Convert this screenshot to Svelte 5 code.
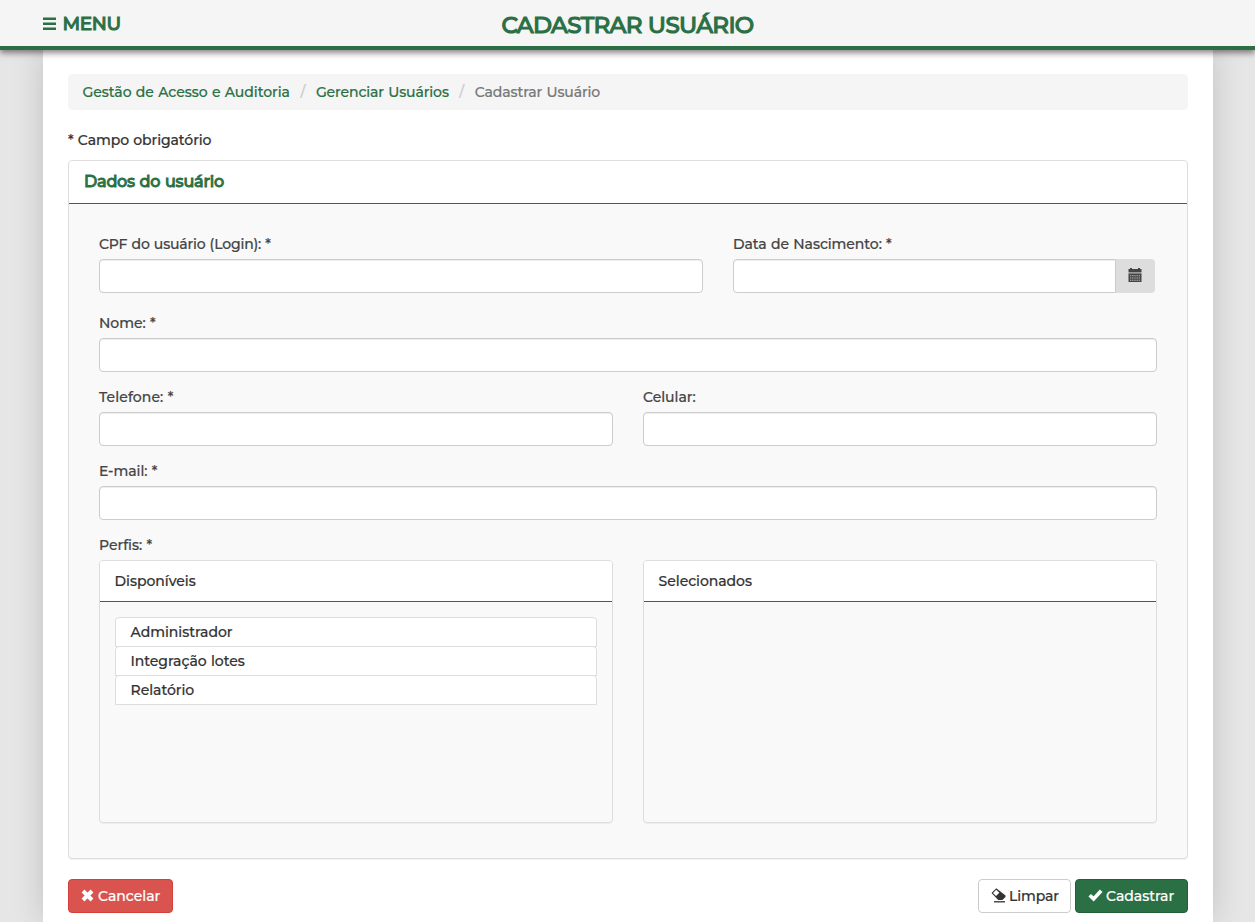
<script>
  const profiles = ['Administrador', 'Integração lotes', 'Relatório'];
</script>

<header class="topbar">
  <button class="menu" type="button">
    <svg width="13" height="14" viewBox="0 0 13 14" aria-hidden="true">
      <path d="M0 1.8H13M0 6.8H13M0 11.8H13" stroke="currentColor" stroke-width="2.6" />
    </svg>
    <span>MENU</span>
  </button>
  <h1>CADASTRAR USUÁRIO</h1>
</header>

<main class="page">
  <nav class="crumbs">
    <a href="#gestao">Gestão de Acesso e Auditoria</a>
    <i>/</i>
    <a href="#usuarios" class="tight">Gerenciar Usuários</a>
    <i>/</i>
    <span class="tight">Cadastrar Usuário</span>
  </nav>

  <p class="note">* Campo obrigatório</p>

  <section class="panel">
    <h2>Dados do usuário</h2>
    <div class="body">
      <div class="row first">
        <div class="field cpf">
          <label for="cpf">CPF do usuário (Login): *</label>
          <input id="cpf" />
        </div>
        <div class="field date">
          <label for="nasc">Data de Nascimento: *</label>
          <div class="group">
            <input id="nasc" />
            <span class="addon">
              <svg width="14" height="15" viewBox="0 0 14 15" aria-hidden="true">
                <path d="M2 0h2v1h6V0h2v1h1.5v3H.5V1H2z" fill="#444" />
                <path d="M.5 4h13v1.5H.5z" fill="#999" />
                <path d="M.5 5.5h13V14H.5z" fill="#444" />
                <path d="M2 7.7h10M2 10h10M2 12.3h10" stroke="#c4c4c4" stroke-width="1.1" stroke-dasharray="1.3 .87" />
              </svg>
            </span>
          </div>
        </div>
      </div>
      <div class="row">
        <div class="field">
          <label for="nome">Nome: *</label>
          <input id="nome" />
        </div>
      </div>
      <div class="row">
        <div class="field">
          <label for="tel" class="loose">Telefone: *</label>
          <input id="tel" />
        </div>
        <div class="field">
          <label for="cel">Celular:</label>
          <input id="cel" />
        </div>
      </div>
      <div class="row">
        <div class="field">
          <label for="mail">E-mail: *</label>
          <input id="mail" />
        </div>
      </div>
      <div class="label">Perfis: *</div>
      <div class="row">
        <div class="box">
          <h3>Disponíveis</h3>
          <ul>
            {#each profiles as name}
              <li>{name}</li>
            {/each}
          </ul>
        </div>
        <div class="box">
          <h3>Selecionados</h3>
        </div>
      </div>
    </div>
  </section>

  <footer class="actions">
    <button class="btn danger" type="button">
      <svg width="13" height="13" viewBox="0 0 13 13" aria-hidden="true">
        <path d="M2 2L11 11M11 2L2 11" stroke="currentColor" stroke-width="4" />
      </svg>
      <span>Cancelar</span>
    </button>
    <div class="right">
      <button class="btn plain" type="button">
        <svg width="15" height="15" viewBox="0 0 15 15" aria-hidden="true">
          <path d="M5.3.3L.5 5l6.7 7.1h4.2L14.5 9V7.6z" fill="currentColor" />
          <path d="M5.2 1.8L2 5l3 3.1 3.4-3.3z" fill="#fff" />
          <path d="M3 13.8h11" stroke="currentColor" stroke-width="1.3" />
        </svg>
        <span>Limpar</span>
      </button>
      <button class="btn success" type="button">
        <svg width="15" height="13" viewBox="0 0 15 13" aria-hidden="true">
          <path d="M1.7 6.2L5.6 9.9L13.2 1.8" fill="none" stroke="currentColor" stroke-width="3.6" />
        </svg>
        <span>Cadastrar</span>
      </button>
    </div>
  </footer>
</main>

<style>
  :global(html) {
    overflow: hidden;
  }
  :global(body) {
    margin: 0;
    background: #e6e6e6;
    color: #333;
    font: 500 14px/20px Montserrat, Inter, "Open Sans", sans-serif;
    -webkit-text-stroke: 0.2px currentColor;
    letter-spacing: -0.03px;
    word-spacing: 0.6px;
    overflow: hidden;
  }
  :global(#app) {
    height: 922px;
    overflow: hidden;
  }
  * {
    box-sizing: border-box;
  }
  .topbar {
    position: relative;
    z-index: 2;
    display: grid;
    grid-template-columns: 1fr auto 1fr;
    height: 50px;
    padding: 0 43px;
    background: #f5f5f5;
    border-bottom: 4px solid #2a7044;
    box-shadow: 0 3px 6px rgba(25, 10, 20, 0.5);
    color: #2a7044;
  }
  .menu {
    display: flex;
    align-items: center;
    gap: 6.5px;
    height: 47px;
    padding: 0;
    border: 0;
    background: none;
    color: inherit;
    font: 500 18.5px/24px Montserrat, Inter, sans-serif;
    letter-spacing: -0.4px;
    -webkit-text-stroke: 1px currentColor;
  }
  h1 {
    margin: 0;
    padding-top: 9px;
    font-size: 23px;
    line-height: 32px;
    font-weight: 500;
    letter-spacing: -0.67px;
    -webkit-text-stroke: 1.1px currentColor;
    white-space: nowrap;
  }
  .page {
    width: 1170px;
    height: 872px;
    margin: 0 auto;
    position: relative;
    left: 0.5px;
    padding: 24px 25px 0;
    background: #fff;
    box-shadow: 0 0 30px rgba(0, 0, 0, 0.16);
  }
  .crumbs {
    display: flex;
    align-items: center;
    height: 36px;
    padding: 0 14.5px;
    border-radius: 4px;
    background: #f5f5f5;
    color: #777;
    white-space: nowrap;
  }
  .crumbs a {
    color: #2a7044;
    text-decoration: none;
  }
  .crumbs .tight {
    letter-spacing: -0.1px;
  }
  .crumbs i {
    width: 26px;
    text-align: center;
    color: #ccc;
    font-style: normal;
  }
  .note {
    margin: 20px 0 10px;
    letter-spacing: -0.07px;
  }
  .panel {
    height: 699px;
    border: 1px solid #ddd;
    border-radius: 4px;
    background: #f9f9f9;
    box-shadow: 0 1px 1px rgba(0, 0, 0, 0.05);
  }
  h2 {
    height: 43px;
    margin: 0;
    padding: 10px 15px;
    border-bottom: 1px solid #2a7044;
    border-radius: 3px 3px 0 0;
    background: #fff;
    color: #2a7044;
    font-size: 16px;
    line-height: 21px;
    font-weight: 500;
    letter-spacing: -0.2px;
    -webkit-text-stroke: 0.9px currentColor;
  }
  .body {
    padding: 30px 30px 0;
    color: #444;
  }
  .row {
    display: flex;
    gap: 30px;
    margin-bottom: 15px;
  }
  .first {
    margin-bottom: 20px;
  }
  .field {
    flex: 1;
    min-width: 0;
  }
  .cpf {
    flex: 0 0 604px;
  }
  .cpf label {
    letter-spacing: -0.17px;
  }
  .date {
    padding-right: 2px;
  }
  .date label {
    letter-spacing: -0.05px;
  }
  label,
  .label {
    display: block;
    height: 20px;
    margin-bottom: 5px;
  }
  .loose {
    letter-spacing: 0.1px;
  }
  input {
    display: block;
    width: 100%;
    height: 34px;
    border: 1px solid #ccc;
    border-radius: 4px;
    background: #fff;
    box-shadow: inset 0 1px 1px rgba(0, 0, 0, 0.075);
  }
  .group {
    display: flex;
  }
  .group input {
    border-radius: 4px 0 0 4px;
  }
  .addon {
    display: grid;
    place-items: center;
    flex: 0 0 39px;
    padding: 0 2px 1px 0;
    border-radius: 0 4px 4px 0;
    background: #ddd;
  }
  .box {
    flex: 1;
    height: 263px;
    border: 1px solid #ddd;
    border-radius: 4px;
    box-shadow: 0 1px 1px rgba(0, 0, 0, 0.05);
    color: #333;
  }
  h3 {
    height: 41px;
    margin: 0;
    padding: 10px 14.6px;
    border-bottom: 1px solid #2a7044;
    border-radius: 3px 3px 0 0;
    background: #fff;
    font: inherit;
    letter-spacing: -0.04px;
  }
  ul {
    margin: 15px;
    padding: 0;
    list-style: none;
  }
  li {
    height: 30px;
    padding: 4px 14.5px;
    border: 1px solid #ddd;
    border-radius: 4px 4px 0 0;
    background: #fff;
  }
  li + li {
    margin-top: -1px;
  }
  .actions {
    display: flex;
    justify-content: space-between;
    margin-top: 20px;
  }
  .right {
    display: flex;
    gap: 4px;
  }
  .btn {
    display: flex;
    align-items: center;
    gap: 4px;
    height: 34px;
    padding: 0 0 0 12px;
    border: 1px solid;
    border-radius: 4px;
    font: inherit;
    -webkit-text-stroke: 0.2px currentColor;
    white-space: nowrap;
  }
  .btn svg {
    flex: none;
    margin-bottom: 2px;
  }
  .danger {
    width: 105px;
    background: #d9534f;
    border-color: #d43f3a;
    color: #fff;
  }
  .plain {
    width: 93px;
    gap: 3px;
    background: #fff;
    border-color: #ccc;
    color: #333;
    letter-spacing: -0.1px;
  }
  .success {
    width: 113px;
    gap: 3px;
    background: #2a7044;
    border-color: #245f3a;
    color: #fff;
  }
</style>
